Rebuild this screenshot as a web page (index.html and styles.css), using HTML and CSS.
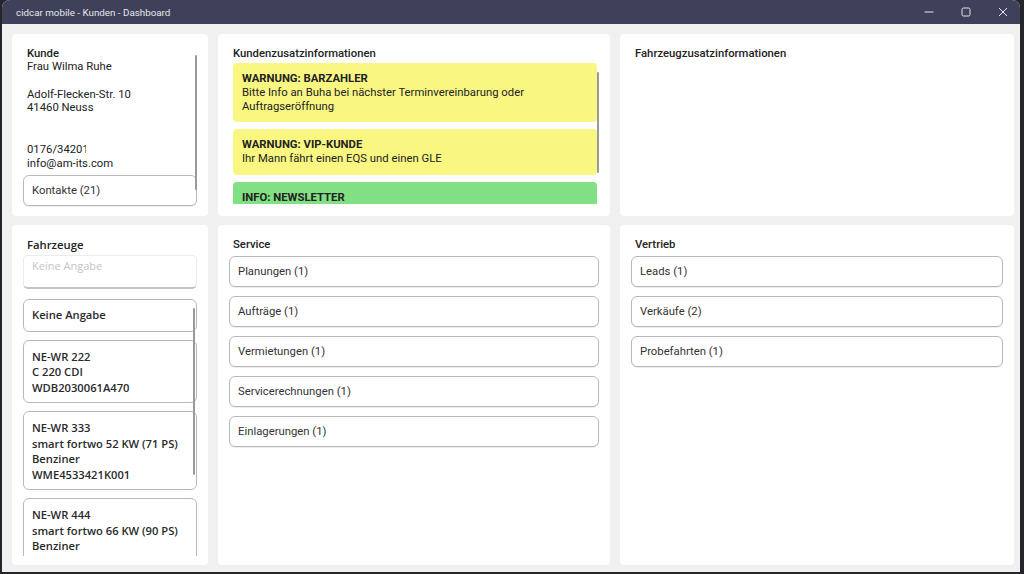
FILE: index.html
```html
<!DOCTYPE html>
<html lang="de">
<head>
    <meta charset="UTF-8">
    <title>cidcar mobile - Kunden - Dashboard</title>
    <link rel="stylesheet" href="styles.css">
</head>
<body>

    <div class="window">
        <div class="titlebar">
            <span class="title">cidcar mobile - Kunden - Dashboard</span>
            <div class="controls">
                <svg width="12" height="12" viewBox="0 0 12 12"><path d="M1.5 6h9" stroke="#e6e7ee" stroke-width="1"/></svg>
                <svg width="12" height="12" viewBox="0 0 12 12"><rect x="2" y="2" width="8" height="8" rx="1.5" fill="none" stroke="#e6e7ee" stroke-width="1"/></svg>
                <svg width="12" height="12" viewBox="0 0 12 12"><path d="M2 2l8 8M10 2l-8 8" stroke="#e6e7ee" stroke-width="1"/></svg>
            </div>
        </div>

        <div class="dashboard">
            <!-- Kunde -->
            <div class="card">
                <div class="scroll kunde">
                    <h2>Kunde</h2>
                    <p>Frau Wilma Ruhe</p>
                    <p>&nbsp;</p>
                    <p>Adolf-Flecken-Str. 10</p>
                    <p>41460 Neuss</p>
                    <p>&nbsp;</p>
                    <p>&nbsp;</p>
                    <p class="phone">0176/34201</p>
                    <p>info@am-its.com</p>
                    <button class="btn">Kontakte (21)</button>
                    <div class="scrollbar sb-kunde"></div>
                </div>
            </div>

            <!-- Kundenzusatzinformationen -->
            <div class="card">
                <h2>Kundenzusatzinformationen</h2>
                <div class="scroll notes">
                    <div class="note warn">
                        <strong>WARNUNG: BARZAHLER</strong>
                        <p>Bitte Info an Buha bei nächster Terminvereinbarung oder Auftragseröffnung</p>
                    </div>
                    <div class="note warn">
                        <strong>WARNUNG: VIP-KUNDE</strong>
                        <p>Ihr Mann fährt einen EQS und einen GLE</p>
                    </div>
                    <div class="note info">
                        <strong>INFO: NEWSLETTER</strong>
                    </div>
                    <div class="scrollbar sb-notes"></div>
                </div>
            </div>

            <!-- Fahrzeugzusatzinformationen -->
            <div class="card">
                <h2>Fahrzeugzusatzinformationen</h2>
            </div>

            <!-- Fahrzeuge -->
            <div class="card fahrzeuge">
                <h2 class="sans">Fahrzeuge</h2>
                <div class="search">Keine Angabe</div>
                <div class="scroll vehicles">
                    <div class="vehicle single">Keine Angabe</div>
                    <div class="vehicle">NE-WR 222<br>C 220 CDI<br>WDB2030061A470</div>
                    <div class="vehicle">NE-WR 333<br>smart fortwo 52 KW (71 PS)<br>Benziner<div class="vin">WME4533421K001</div></div>
                    <div class="vehicle">NE-WR 444<br>smart fortwo 66 KW (90 PS)<br>Benziner</div>
                    <div class="scrollbar sb-vehicles"></div>
                </div>
            </div>

            <!-- Service -->
            <div class="card">
                <h2>Service</h2>
                <div class="list">
                    <button class="btn">Planungen (1)</button>
                    <button class="btn">Aufträge (1)</button>
                    <button class="btn">Vermietungen (1)</button>
                    <button class="btn">Servicerechnungen (1)</button>
                    <button class="btn">Einlagerungen (1)</button>
                </div>
            </div>

            <!-- Vertrieb -->
            <div class="card">
                <h2>Vertrieb</h2>
                <div class="list">
                    <button class="btn">Leads (1)</button>
                    <button class="btn">Verkäufe (2)</button>
                    <button class="btn">Probefahrten (1)</button>
                </div>
            </div>
        </div>
    </div>

</body>
</html>
```

FILE: styles.css
```css
body {
    margin: 0;
    padding: 0;
    background: #26262a;
    font-family: Roboto, "Liberation Sans", sans-serif;
    overflow: hidden;
}

.window {
    margin-left: 2px;
    width: 1018px;
    height: 572px;
    background: #f0f0f0;
    border-radius: 8px 8px 0 0;
    overflow: hidden;
}

.titlebar {
    height: 24px;
    background: #3e4159;
    color: #e6e7ee;
    display: flex;
    align-items: center;
    justify-content: space-between;
    padding: 0 0 0 14px;
}

.title {
    font-size: 9.8px;
}

.controls {
    display: flex;
    gap: 25px;
    padding-right: 11px;
}

.dashboard {
    display: grid;
    grid-template-columns: 196px 392px 394px;
    grid-template-rows: 182px 340px;
    gap: 9px 10px;
    padding: 10px;
}

.card {
    background: white;
    border-radius: 4px;
    padding: 13px 11px 8px 11px;
    box-sizing: border-box;
    overflow: hidden;
    color: #222;
    font-size: 11.3px;
}

.card h2 {
    font-size: 11.3px;
    font-weight: 500;
    margin: 0 0 0 4px;
    line-height: 14px;
    color: #222;
}

.card h2.sans {
    font-family: "Open Sans", sans-serif;
    font-weight: 600;
}

.scroll {
    position: relative;
    overflow: hidden;
}

.scrollbar {
    position: absolute;
    width: 2px;
    background: #9a9a9a;
    border-radius: 1px;
}

/* Kunde */
.kunde {
    height: 160px;
}

.kunde h2 {
    line-height: 13px;
}

.kunde p {
    margin: 0 0 0 4px;
    line-height: 13.8px;
    height: 13.8px;
}

.kunde p.phone {
    width: 59px;
    overflow: hidden;
    white-space: nowrap;
}

.kunde .btn {
    margin-top: 5px;
}

.sb-kunde {
    left: 172px;
    top: 8px;
    height: 135px;
}

/* Notizen */
.notes {
    height: 141px;
    margin: 2px 0 0 4px;
    padding-right: 2px;
}

.note {
    border-radius: 4px;
    padding: 9px;
    margin-bottom: 7px;
    line-height: 13.8px;
}

.note strong {
    font-weight: 700;
    color: #222;
}

.note p {
    margin: 0;
    padding-right: 40px;
}

.warn {
    background: #f9f782;
}

.info {
    background: #80e083;
}

.sb-notes {
    right: 0;
    top: 9px;
    height: 101px;
}

/* Buttons */
.btn {
    display: block;
    width: 100%;
    height: 31px;
    text-align: left;
    background: white;
    border: 1px solid #b9b9b9;
    border-radius: 6px;
    padding: 0 0 0 8px;
    font-family: Roboto, "Liberation Sans", sans-serif;
    font-size: 11.3px;
    color: #333;
    box-shadow: 0 1px 1px rgba(0, 0, 0, 0.08);
}

.list {
    display: flex;
    flex-direction: column;
    gap: 9px;
    margin-top: 4px;
}

/* Fahrzeuge */
.fahrzeuge {
    font-family: "Open Sans", sans-serif;
}

.search {
    margin-top: 3px;
    height: 34px;
    box-sizing: border-box;
    border: 1px solid #ececec;
    border-bottom: 2px solid #c4c4c4;
    border-radius: 5px;
    padding: 2px 8px;
    color: #c4c4c4;
    font-size: 11px;
}

.vehicles {
    margin-top: 10px;
    height: 257px;
    display: flex;
    flex-direction: column;
    gap: 8px;
}

.vehicle {
    flex: none;
    border: 1px solid #b9b9b9;
    border-radius: 6px;
    padding: 8px 8px 7px 8px;
    font-size: 11.2px;
    font-weight: 600;
    line-height: 15.5px;
    color: #2a2a2a;
}

.vehicle.single {
    padding: 7px 8px 8px 8px;
}

.vin {
    width: 97px;
    overflow: hidden;
    white-space: nowrap;
}

.sb-vehicles {
    left: 170px;
    top: 9px;
    height: 167px;
}
```
